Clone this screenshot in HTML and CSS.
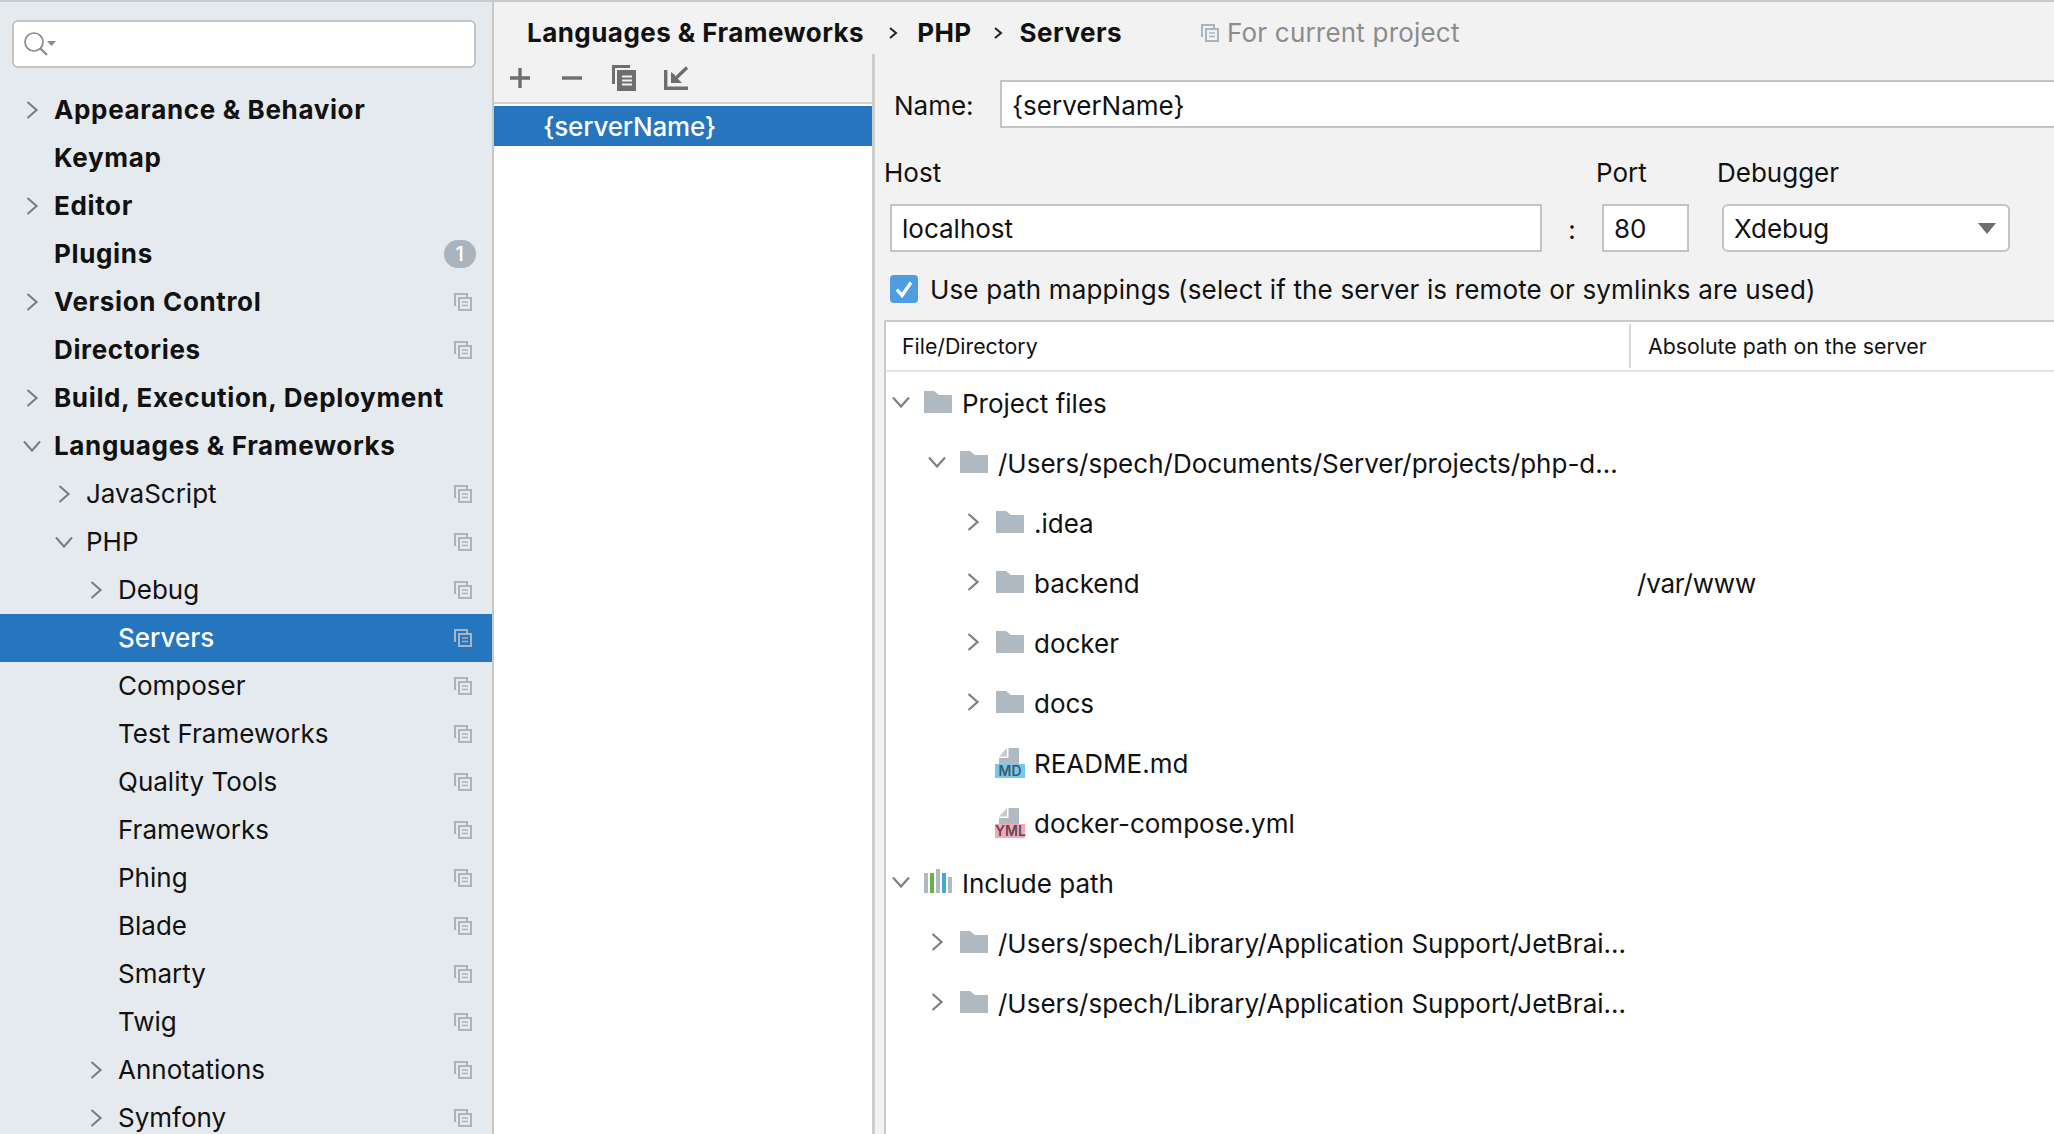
FILE: index.html
```html
<!DOCTYPE html>
<html lang="en">
<head>
    <meta charset="UTF-8">
    <title>Preferences - Servers</title>
    <link rel="stylesheet" href="styles.css">
</head>
<body>
    <svg class="defs" width="0" height="0">
        <symbol id="chev-r" viewBox="0 0 12 18"><path d="M1.500 1l9 8-9 8" fill="none" stroke="currentColor" stroke-width="2.200"/></symbol>
        <symbol id="chev-d" viewBox="0 0 18 12"><path d="M1 1.500l8 9 8-9" fill="none" stroke="currentColor" stroke-width="2.200"/></symbol>
        <symbol id="proj" viewBox="0 0 18 18"><path d="M1 13V1h12v3M5 5h12v12H5z" fill="none" stroke="currentColor" stroke-width="2"/><path d="M8 9h6M8 12.500h6" stroke="currentColor" stroke-width="1.600"/></symbol>
        <symbol id="folder" viewBox="0 0 28 22"><path d="M0 0h10l5 4h13v18H0z" fill="#afbac2"/></symbol>
        <symbol id="page" viewBox="0 0 20 16"><path d="M9.500 0H20v16H0V10h9.500z" fill="#afbac2"/><path d="M8 0v8.500H0z" fill="#c3ccd2"/></symbol>
    </svg>
    <div class="app">
        <aside class="sidebar">
            <div class="search">
                <svg width="32" height="24" viewBox="0 0 32 24"><circle cx="10" cy="10" r="9" fill="none" stroke="#8a8a8a" stroke-width="1.700"/><path d="M16 16l7 7" stroke="#8a8a8a" stroke-width="2.200"/><path d="M23 9h9l-4.500 5z" fill="#8a8a8a"/></svg>
            </div>
            <ul class="nav">
                <li class="nav-row bold"><svg class="chev"><use href="#chev-r"/></svg><span class="label">Appearance &amp; Behavior</span></li>
                <li class="nav-row bold"><span class="no-chev"></span><span class="label">Keymap</span></li>
                <li class="nav-row bold"><svg class="chev"><use href="#chev-r"/></svg><span class="label">Editor</span></li>
                <li class="nav-row bold"><span class="no-chev"></span><span class="label">Plugins</span><span class="badge">1</span></li>
                <li class="nav-row bold"><svg class="chev"><use href="#chev-r"/></svg><span class="label">Version Control</span><svg class="proj"><use href="#proj"/></svg></li>
                <li class="nav-row bold"><span class="no-chev"></span><span class="label">Directories</span><svg class="proj"><use href="#proj"/></svg></li>
                <li class="nav-row bold"><svg class="chev"><use href="#chev-r"/></svg><span class="label">Build, Execution, Deployment</span></li>
                <li class="nav-row bold"><svg class="chev-open"><use href="#chev-d"/></svg><span class="label">Languages &amp; Frameworks</span></li>
                <li class="nav-row lvl1"><svg class="chev"><use href="#chev-r"/></svg><span class="label">JavaScript</span><svg class="proj"><use href="#proj"/></svg></li>
                <li class="nav-row lvl1"><svg class="chev-open"><use href="#chev-d"/></svg><span class="label">PHP</span><svg class="proj"><use href="#proj"/></svg></li>
                <li class="nav-row lvl2"><svg class="chev"><use href="#chev-r"/></svg><span class="label">Debug</span><svg class="proj"><use href="#proj"/></svg></li>
                <li class="nav-row lvl2 selected"><span class="no-chev"></span><span class="label">Servers</span><svg class="proj"><use href="#proj"/></svg></li>
                <li class="nav-row lvl2"><span class="no-chev"></span><span class="label">Composer</span><svg class="proj"><use href="#proj"/></svg></li>
                <li class="nav-row lvl2"><span class="no-chev"></span><span class="label">Test Frameworks</span><svg class="proj"><use href="#proj"/></svg></li>
                <li class="nav-row lvl2"><span class="no-chev"></span><span class="label">Quality Tools</span><svg class="proj"><use href="#proj"/></svg></li>
                <li class="nav-row lvl2"><span class="no-chev"></span><span class="label">Frameworks</span><svg class="proj"><use href="#proj"/></svg></li>
                <li class="nav-row lvl2"><span class="no-chev"></span><span class="label">Phing</span><svg class="proj"><use href="#proj"/></svg></li>
                <li class="nav-row lvl2"><span class="no-chev"></span><span class="label">Blade</span><svg class="proj"><use href="#proj"/></svg></li>
                <li class="nav-row lvl2"><span class="no-chev"></span><span class="label">Smarty</span><svg class="proj"><use href="#proj"/></svg></li>
                <li class="nav-row lvl2"><span class="no-chev"></span><span class="label">Twig</span><svg class="proj"><use href="#proj"/></svg></li>
                <li class="nav-row lvl2"><svg class="chev"><use href="#chev-r"/></svg><span class="label">Annotations</span><svg class="proj"><use href="#proj"/></svg></li>
                <li class="nav-row lvl2"><svg class="chev"><use href="#chev-r"/></svg><span class="label">Symfony</span><svg class="proj"><use href="#proj"/></svg></li>
            </ul>
        </aside>

        <main class="main">
            <div class="crumbs">
                <span class="crumb">Languages &amp; Frameworks</span>
                <svg class="crumb-sep" viewBox="0 0 12 18"><path d="M3 4l6 5-6 5" fill="none" stroke="#222" stroke-width="2"/></svg>
                <span class="crumb">PHP</span>
                <svg class="crumb-sep tight" viewBox="0 0 12 18"><path d="M3 4l6 5-6 5" fill="none" stroke="#222" stroke-width="2"/></svg>
                <span class="crumb">Servers</span>
                <svg class="proj crumb-proj"><use href="#proj"/></svg>
                <span class="crumb-note">For current project</span>
            </div>
            <div class="content">
                <section class="servers">
                    <div class="toolbar">
                        <svg width="24" height="24" viewBox="0 0 24 24"><path d="M12 2v20M2 12h20" stroke="#6e6e6e" stroke-width="3.400"/></svg>
                        <svg width="24" height="24" viewBox="0 0 24 24"><path d="M2 12h20" stroke="#6e6e6e" stroke-width="3.400"/></svg>
                        <svg width="24" height="26" viewBox="0 0 24 26"><path d="M1.500 19V1.500H18" fill="none" stroke="#6e6e6e" stroke-width="3"/><path d="M5 5h19v21H5z" fill="#6e6e6e"/><path d="M10 11.500h10M10 15.500h10M10 19.500h10" stroke="#f2f2f2" stroke-width="1.800"/></svg>
                        <svg width="24" height="24" viewBox="0 0 24 24"><path d="M1.700 4v18.300H24" fill="none" stroke="#6e6e6e" stroke-width="3.400"/><path d="M23 1.500L10 14" stroke="#6e6e6e" stroke-width="3.400"/><path d="M7 6v11h11l-4-4h-3V9z" fill="#6e6e6e"/></svg>
                    </div>
                    <div class="server-row">{serverName}</div>
                </section>
                <section class="details">
                    <div class="name-row">
                        <label class="name-label">Name:</label>
                        <div class="field name-field">{serverName}</div>
                    </div>
                    <div class="host-grid">
                        <div class="cap cap-host">Host</div>
                        <div></div>
                        <div class="cap cap-port">Port</div>
                        <div></div>
                        <div class="cap cap-debugger">Debugger</div>
                        <div class="field">localhost</div>
                        <div class="colon">:</div>
                        <div class="field">80</div>
                        <div></div>
                        <div class="field combo">Xdebug<svg width="18" height="11" viewBox="0 0 18 11"><path d="M0 0h18l-9 11z" fill="#6e6e6e"/></svg></div>
                    </div>
                    <div class="check-row">
                        <svg class="check" viewBox="0 0 28 28"><rect width="28" height="28" rx="4" fill="#4e9de2"/><path d="M7 14.500l5 6 9-13" fill="none" stroke="#fff" stroke-width="3.400"/></svg>
                        <span>Use path mappings (select if the server is remote or symlinks are used)</span>
                    </div>
                    <div class="table">
                        <div class="thead">
                            <div class="th first">File/Directory</div>
                            <div class="th second">Absolute path on the server</div>
                        </div>
                        <div class="tree">
                            <div class="tree-row d0"><svg class="chev-open"><use href="#chev-d"/></svg><svg class="folder"><use href="#folder"/></svg><span>Project files</span></div>
                            <div class="tree-row d1"><svg class="chev-open"><use href="#chev-d"/></svg><svg class="folder"><use href="#folder"/></svg><span>/Users/spech/Documents/Server/projects/php-d...</span></div>
                            <div class="tree-row d2"><svg class="chev"><use href="#chev-r"/></svg><svg class="folder"><use href="#folder"/></svg><span>.idea</span></div>
                            <div class="tree-row d2"><svg class="chev"><use href="#chev-r"/></svg><svg class="folder"><use href="#folder"/></svg><span>backend</span><span class="mapped">/var/www</span></div>
                            <div class="tree-row d2"><svg class="chev"><use href="#chev-r"/></svg><svg class="folder"><use href="#folder"/></svg><span>docker</span></div>
                            <div class="tree-row d2"><svg class="chev"><use href="#chev-r"/></svg><svg class="folder"><use href="#folder"/></svg><span>docs</span></div>
                            <div class="tree-row d2">
                                <span class="tree-gap"></span>
                                <span class="file-icon"><svg class="page"><use href="#page"/></svg><span class="tag tag-md">MD</span></span>
                                <span>README.md</span>
                            </div>
                            <div class="tree-row d2">
                                <span class="tree-gap"></span>
                                <span class="file-icon"><svg class="page"><use href="#page"/></svg><span class="tag tag-yml">YML</span></span>
                                <span>docker-compose.yml</span>
                            </div>
                            <div class="tree-row d0"><svg class="chev-open"><use href="#chev-d"/></svg>
                                <svg class="folder include" viewBox="0 0 28 24"><rect x="0" y="4" width="4" height="20" fill="#afbac2"/><rect x="6" y="4" width="4" height="20" fill="#62b543"/><rect x="12" y="0" width="4" height="24" fill="#afbac2"/><rect x="18" y="4" width="4" height="20" fill="#40a9dc"/><rect x="24" y="8" width="4" height="16" fill="#afbac2"/></svg>
                                <span>Include path</span></div>
                            <div class="tree-row d1"><svg class="chev"><use href="#chev-r"/></svg><svg class="folder"><use href="#folder"/></svg><span>/Users/spech/Library/Application Support/JetBrai...</span></div>
                            <div class="tree-row d1"><svg class="chev"><use href="#chev-r"/></svg><svg class="folder"><use href="#folder"/></svg><span>/Users/spech/Library/Application Support/JetBrai...</span></div>
                        </div>
                    </div>
                </section>
            </div>
        </main>
    </div>
</body>
</html>
```

FILE: styles.css
```css
* {
    box-sizing: border-box;
}
html, body {
    margin: 0;
    padding: 0;
    height: 100%;
    overflow: hidden;
}
body {
    font-family: Inter, "Noto Sans", sans-serif;
    font-size: 26px;
    color: #111;
    background: #f2f2f2;
}
.defs {
    display: block;
    height: 0;
}
.app {
    display: flex;
    height: 1134px;
    border-top: 2px solid #c9c9c9;
}

/* left settings tree */
.sidebar {
    width: 494px;
    flex-shrink: 0;
    background: #e5eaee;
    border-right: 2px solid #c8c8c8;
    overflow: hidden;
}
.search {
    margin: 18px 16px 0 12px;
    height: 48px;
    background: #fff;
    border: 2px solid #c4c4c4;
    border-radius: 6px;
    display: flex;
    align-items: center;
    padding-left: 10px;
}
.nav {
    list-style: none;
    margin: 18px 0 0;
    padding: 0;
}
.nav-row {
    display: flex;
    align-items: center;
    height: 48px;
    padding-left: 26px;
    padding-right: 20px;
}
.nav-row.bold {
    font-weight: 700;
    letter-spacing: 0.65px;
}
.nav-row.lvl1 {
    padding-left: 58px;
}
.nav-row.lvl2 {
    padding-left: 90px;
}
.nav-row.selected {
    background: #2675bf;
    color: #fff;
    font-weight: 500;
}
.chev, .no-chev {
    width: 12px;
    height: 18px;
    flex-shrink: 0;
    color: #808080;
}
.chev-open {
    width: 18px;
    height: 12px;
    margin-left: -3px;
    margin-right: -3px;
    flex-shrink: 0;
    color: #808080;
}
.label {
    margin: -2px 0 0 16px;
    flex: 1;
    white-space: nowrap;
}
.proj {
    width: 18px;
    height: 18px;
    color: #a9b4bd;
    flex-shrink: 0;
}
.badge {
    width: 32px;
    height: 28px;
    border-radius: 14px;
    background: #a9b4bd;
    color: #fff;
    font-size: 20px;
    font-weight: 500;
    text-align: center;
    line-height: 28px;
    margin-right: -4px;
}

/* breadcrumb and right side */
.main {
    flex: 1;
    min-width: 0;
    display: flex;
    flex-direction: column;
}
.crumbs {
    height: 52px;
    display: flex;
    align-items: center;
    padding: 9px 0 0 33px;
    flex-shrink: 0;
}
.crumb {
    font-weight: 700;
    letter-spacing: 0.45px;
    white-space: nowrap;
}
.crumb-sep {
    width: 12px;
    height: 18px;
    margin: 0 18px 0 23px;
}
.crumb-sep.tight {
    margin: 0 16px 0 20px;
}
.crumb-proj {
    margin-left: 79px;
    margin-right: 8px;
}
.crumb-note {
    color: #8c8c8c;
    letter-spacing: 0.2px;
}
.content {
    flex: 1;
    display: flex;
    min-height: 0;
}
.servers {
    width: 381px;
    flex-shrink: 0;
    background: #fff;
    border-right: 3px solid #cdcdcd;
}
.toolbar {
    height: 50px;
    background: #f2f2f2;
    border-bottom: 2px solid #d1d1d1;
    display: flex;
    align-items: center;
    padding-left: 14px;
    gap: 28px;
}
.server-row {
    margin-top: 2px;
    height: 40px;
    padding-top: 2px;
    line-height: 38px;
    background: #2675bf;
    color: #fff;
    padding-left: 49px;
    font-weight: 500;
    letter-spacing: -0.2px;
}
.details {
    flex: 1;
    min-width: 0;
    padding-top: 26px;
    overflow: hidden;
}
.name-row {
    display: flex;
    align-items: center;
    padding-left: 19px;
}
.name-label {
    width: 106px;
    flex-shrink: 0;
    padding-top: 2px;
}
.field {
    height: 48px;
    background: #fff;
    border: 2px solid #c4c4c4;
    display: flex;
    align-items: center;
    padding-left: 10px;
    white-space: nowrap;
}
.name-field {
    flex: 1;
    margin-right: -4px;
    padding-top: 2px;
}
.host-grid {
    display: grid;
    grid-template-columns: 652px 60px 87px 33px 288px;
    padding-left: 15px;
    margin-top: 20px;
}
.cap {
    height: 56px;
    line-height: 50px;
    white-space: nowrap;
}
.cap-host {
    margin-left: -6px;
}
.cap-port {
    margin-left: -6px;
}
.cap-debugger {
    margin-left: -5px;
}
.colon {
    text-align: center;
    line-height: 48px;
    padding-top: 2px;
}
.combo {
    border-radius: 6px;
    justify-content: space-between;
    padding-right: 12px;
}
.check-row {
    display: flex;
    align-items: center;
    gap: 12px;
    margin: 21px 0 0 15px;
    height: 28px;
    white-space: nowrap;
    letter-spacing: 0.15px;
}
.check {
    width: 28px;
    height: 28px;
    flex-shrink: 0;
}

/* mappings table */
.table {
    margin: 17px 0 0 9px;
    background: #fff;
    border-top: 2px solid #c9c9c9;
    border-left: 2px solid #c9c9c9;
    height: 900px;
}
.thead {
    display: flex;
    height: 50px;
    border-bottom: 2px solid #e4e4e4;
    font-size: 21.300px;
}
.th {
    display: flex;
    align-items: center;
    padding-left: 16px;
    white-space: nowrap;
}
.th.first {
    width: 743px;
    flex-shrink: 0;
}
.th.second {
    padding-left: 17px;
    border-left: 2px solid #d9d9d9;
    margin: 2px 0 2px;
}
.tree {
    padding-top: 1px;
}
.tree-row {
    display: flex;
    align-items: center;
    height: 60px;
    white-space: nowrap;
    position: relative;
}
.tree-row.d0 {
    padding-left: 6px;
}
.tree-row.d1 {
    padding-left: 42px;
}
.tree-row.d2 {
    padding-left: 78px;
}
.tree-row .chev {
    margin: -3px 3px 0;
}
.tree-row .chev-open {
    margin: -3px 0 0;
}
.folder {
    width: 28px;
    height: 22px;
    margin-left: 14px;
    margin-right: 10px;
    position: relative;
    top: -1px;
    flex-shrink: 0;
}
.folder.include {
    height: 24px;
    top: -2px;
}
.tree-gap {
    width: 18px;
    flex-shrink: 0;
}
.mapped {
    position: absolute;
    left: 751px;
    letter-spacing: -0.2px;
}
.file-icon {
    width: 30px;
    height: 30px;
    margin-left: 13px;
    margin-right: 9px;
    display: flex;
    flex-direction: column;
    align-items: flex-end;
    position: relative;
    flex-shrink: 0;
}
.page {
    width: 20px;
    height: 16px;
    margin-right: 6px;
}
.tag {
    position: absolute;
    left: 0;
    bottom: 0;
    width: 30px;
    height: 14px;
    font-size: 14px;
    font-weight: 600;
    line-height: 14px;
    text-align: center;
    color: #43596b;
}
.tag-md {
    background: #75c8ea;
}
.tag-yml {
    background: #f7a8b8;
    color: #5a4a55;
}
```
